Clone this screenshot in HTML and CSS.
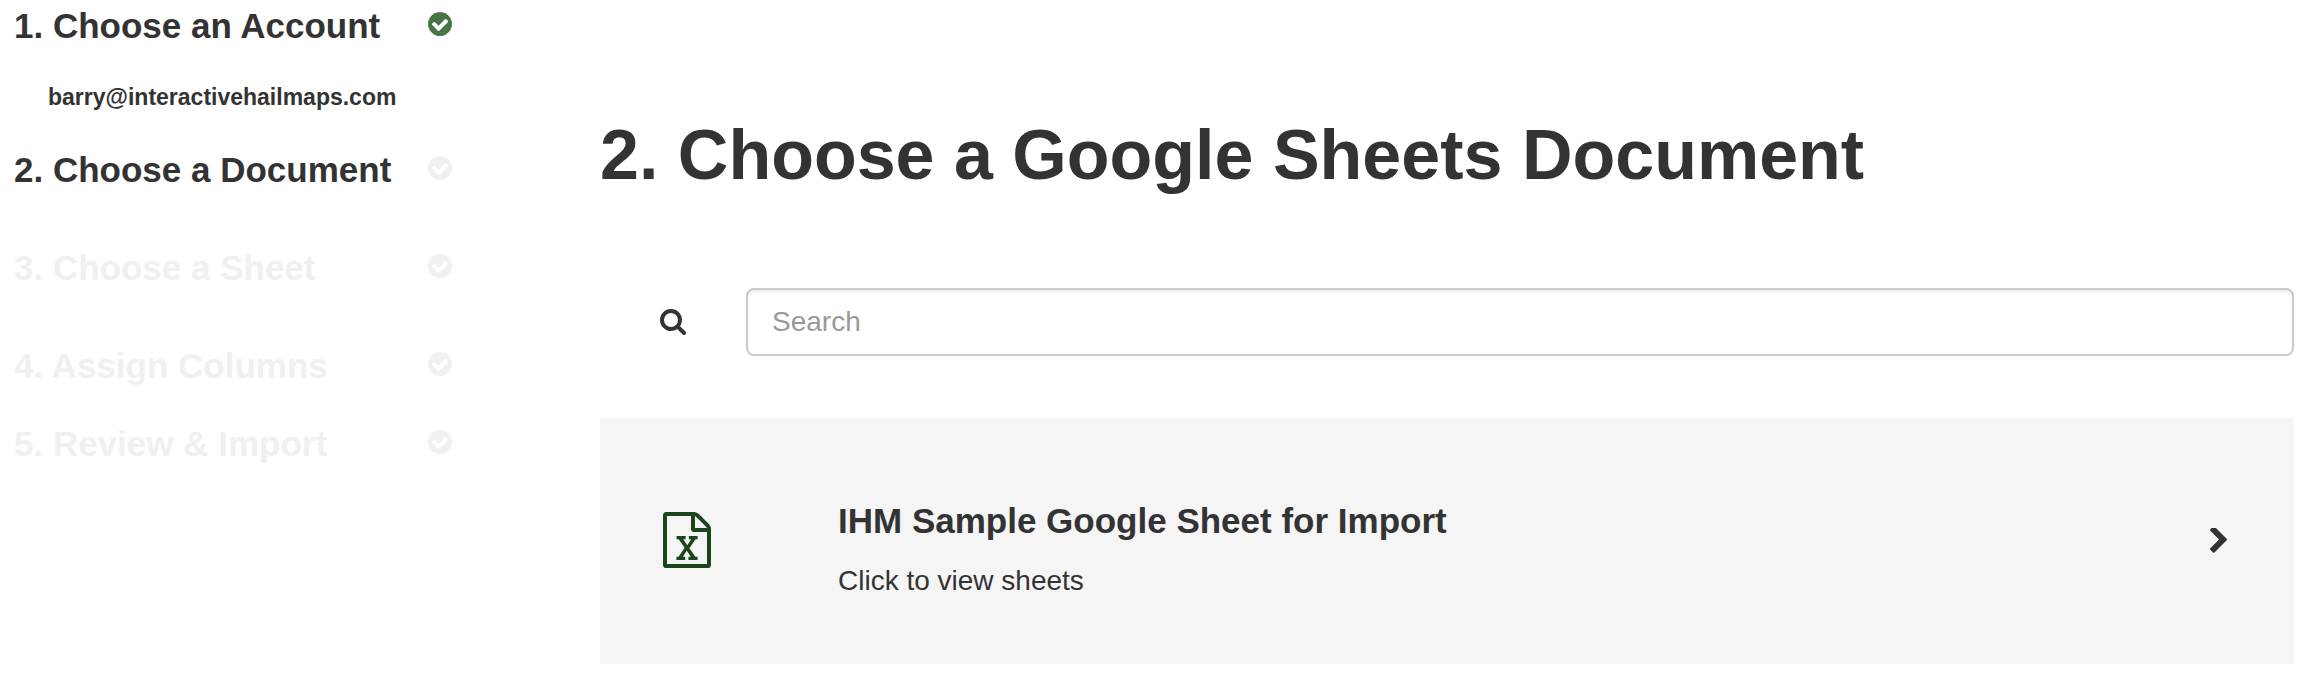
FILE: index.html
```html
<!DOCTYPE html>
<html lang="en">
<head>
    <meta charset="UTF-8">
    <meta name="viewport" content="width=device-width, initial-scale=1.0">
    <title>Choose a Google Sheets Document</title>
    <link rel="stylesheet" href="styles.css">
</head>
<body>
    <!-- Icons shared by the page -->
    <svg class="icon-defs" aria-hidden="true">
        <symbol id="icon-check" viewBox="128 128 1536 1536">
            <path d="M1412 734q0-28-18-46l-91-90q-19-19-45-19t-45 19l-408 407-226-226q-19-19-45-19t-45 19l-91 90q-18 18-18 46 0 27 18 45l362 362q19 19 45 19 27 0 46-19l543-543q18-18 18-45zm252 162q0 209-103 385.5t-279.5 279.5-385.5 103-385.5-103-279.5-279.5-103-385.5 103-385.5 279.5-279.5 385.5-103 385.5 103 279.5 279.5 103 385.5z"/>
        </symbol>
    </svg>

    <div class="import-wizard">
        <aside class="sidebar">
            <ol class="steps">
                <li class="step done">
                    <div class="step-title">
                        <h3>1. Choose an Account</h3>
                        <svg class="step-icon"><use href="#icon-check"/></svg>
                    </div>
                    <p class="step-account">barry@interactivehailmaps.com</p>
                </li>
                <li class="step current">
                    <div class="step-title">
                        <h3>2. Choose a Document</h3>
                        <svg class="step-icon"><use href="#icon-check"/></svg>
                    </div>
                    <div class="step-detail"></div>
                </li>
                <li class="step">
                    <div class="step-title">
                        <h3>3. Choose a Sheet</h3>
                        <svg class="step-icon"><use href="#icon-check"/></svg>
                    </div>
                    <div class="step-detail"></div>
                </li>
                <li class="step">
                    <div class="step-title">
                        <h3>4. Assign Columns</h3>
                        <svg class="step-icon"><use href="#icon-check"/></svg>
                    </div>
                </li>
                <li class="step">
                    <div class="step-title">
                        <h3>5. Review &amp; Import</h3>
                        <svg class="step-icon"><use href="#icon-check"/></svg>
                    </div>
                </li>
            </ol>
        </aside>

        <main class="content">
            <h1>2. Choose a Google Sheets Document</h1>

            <form class="search-row">
                <label class="search-label" for="search" aria-label="Search">
                    <svg class="search-icon" viewBox="64 128 1664 1664" aria-hidden="true">
                        <path d="M1216 832q0-185-131.5-316.5t-316.5-131.5-316.5 131.5-131.5 316.5 131.5 316.5 316.5 131.5 316.5-131.5 131.5-316.5zm512 832q0 52-38 90t-90 38q-54 0-90-38l-343-342q-179 124-399 124-143 0-273.5-55.5t-225-150-150-225-55.5-273.5 55.5-273.5 150-225 225-150 273.5-55.5 273.5 55.5 225 150 150 225 55.5 273.5q0 220-124 399l343 343q37 37 37 90z"/>
                    </svg>
                </label>
                <input class="search-input" type="text" id="search" placeholder="Search">
            </form>

            <a class="document" href="#">
                <svg class="document-icon" viewBox="128 0 1536 1792" aria-hidden="true">
                    <path d="M1596 380q28 28 48 76t20 88v1152q0 40-28 68t-68 28h-1344q-40 0-68-28t-28-68v-1600q0-40 28-68t68-28h896q40 0 88 20t76 48zm-444-244v376h376q-10-29-22-41l-313-313q-12-12-41-22zm384 1528v-1024h-416q-40 0-68-28t-28-68v-416h-768v1536h1280zm-979-234v106h281v-106h-75l103-161q5-7 10-16.5t7.5-13.5 3.5-4h2q1 4 5 10 2 4 4.5 7.5t6 8 6.5 8.5l107 161h-76v106h291v-106h-68l-192-273 195-282h67v-107h-279v107h74l-103 159q-4 7-10 16.5t-9 13.5l-2 3h-2q-1-4-5-10-6-11-17-23l-106-159h76v-107h-290v107h68l189 272-194 283h-68z"/>
                </svg>
                <div class="document-text">
                    <h3>IHM Sample Google Sheet for Import</h3>
                    <p>Click to view sheets</p>
                </div>
                <svg class="document-arrow" viewBox="346 147 1036 1491" aria-hidden="true">
                    <path d="M1363 877l-742 742q-19 19-45 19t-45-19l-166-166q-19-19-19-45t19-45l531-531-531-531q-19-19-19-45t19-45l166-166q19-19 45-19t45 19l742 742q19 19 19 45t-19 45z"/>
                </svg>
            </a>
        </main>
    </div>
</body>
</html>
```

FILE: styles.css
```css
* {
    margin: 0;
    padding: 0;
    box-sizing: border-box;
}

body {
    font-family: 'Helvetica Neue', 'Liberation Sans', Arial, sans-serif;
    font-size: 28px;
    line-height: 40px;
    color: #333333;
    background-color: #ffffff;
}

svg {
    display: block;
    flex-shrink: 0;
    fill: currentColor;
}

h3 {
    font-size: 35px;
    line-height: 40px;
    font-weight: bold;
}

.icon-defs {
    display: none;
}

.import-wizard {
    display: flex;
    gap: 148px;
    padding: 0 16px 12px 14px;
}

/* Steps */
.sidebar {
    flex: 0 0 438px;
    padding-top: 6px;
}

.steps {
    display: flex;
    flex-direction: column;
    gap: 38px;
    list-style: none;
}

.step {
    color: #f0f0f0;
}

.step-title {
    display: flex;
    justify-content: space-between;
    align-items: flex-start;
}

.step-icon {
    width: 24px;
    height: 24px;
    margin-top: 6px;
}

.step.done,
.step.current {
    color: #333333;
}

.step.done .step-icon {
    color: #497545;
}

.step.current .step-icon {
    color: #f0f0f0;
}

.step-account {
    padding: 36px 0 0 34px;
    font-size: 23px;
    line-height: 30px;
    font-weight: bold;
}

.step-detail {
    height: 20px;
}

/* Document list */
.content {
    flex: 1;
    min-width: 0;
    padding-top: 115px;
}

h1 {
    margin-bottom: 93px;
    font-size: 70px;
    line-height: 80px;
    font-weight: bold;
}

.search-row {
    display: flex;
    align-items: center;
    margin-bottom: 62px;
}

.search-label {
    flex: 0 0 146px;
    display: flex;
    justify-content: center;
}

.search-icon {
    width: 26px;
    height: 26px;
}

.search-input {
    flex: 1;
    min-width: 0;
    height: 68px;
    padding: 0 24px;
    border: 2px solid #cccccc;
    border-radius: 8px;
    box-shadow: inset 0 2px 2px rgba(0, 0, 0, 0.075);
    background-color: #ffffff;
    color: #555555;
    font-family: inherit;
    font-size: 28px;
}

.search-input::placeholder {
    color: #999999;
    opacity: 1;
}

.document {
    display: flex;
    align-items: center;
    padding: 61px 67px 63px 63px;
    background-color: #f5f5f5;
    color: #333333;
    text-decoration: none;
}

.document-icon {
    width: 48px;
    height: 56px;
    color: #1b451b;
}

.document-text {
    flex: 1;
    padding: 22px 0 0 127px;
}

.document-text h3 {
    margin-bottom: 20px;
}

.document-arrow {
    width: 17px;
    height: 25px;
}
```
